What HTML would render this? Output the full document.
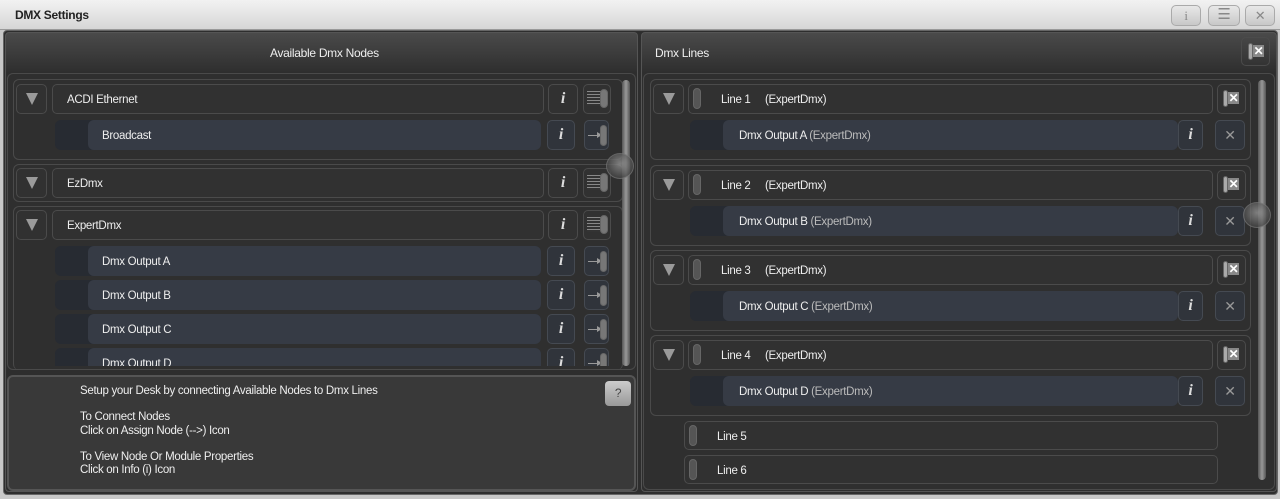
<!DOCTYPE html>
<html><head><meta charset="utf-8"><style>
*{box-sizing:border-box;margin:0;padding:0}
body{width:1280px;height:499px;overflow:hidden;background:#c8c8c8;font-family:"Liberation Sans",sans-serif;font-size:11.5px;color:#eee;position:relative;letter-spacing:-0.3px}
.a{position:absolute}
.title{left:0;top:0;width:1280px;height:30px;background:linear-gradient(#f2f2f2,#d6d6d6);border-bottom:1px solid #999}
.title span{position:absolute;left:15px;top:8px;font-weight:bold;font-size:12px;color:#222}
.tb{top:5px;height:21px;border:1px solid #aaa;border-radius:5px;background:linear-gradient(#e8e8e8,#c8c8c8);color:#888;text-align:center;font-size:13px;line-height:19px}
.body{left:3px;top:30px;width:1275px;height:465px;background:#2e2e2e;border:1px solid #666;border-radius:4px}
.panel{border:1px solid #555;border-radius:4px}
.box{border:1px solid #4a4a4a;border-radius:6px;background:#2f2f2f}
.grp{border:1px solid #4a4a4a;border-radius:6px}
.row{border:1px solid #4b4b4b;border-radius:5px;background:#313131}
.child{border-radius:6px;background:#272b32}
.child .in{position:absolute;left:33px;top:0;right:0;bottom:0;background:#363b45;border-radius:6px}
.btn{border:1px solid #454a52;border-radius:5px;background:#30343b}
.tri{width:0;height:0;border-left:6px solid transparent;border-right:6px solid transparent;border-top:12px solid #9a9a9a}
.i{font-family:"Liberation Serif",serif;font-style:italic;font-weight:bold;font-size:16px;color:#ddd;text-align:center;line-height:28px}
.x{color:#999;text-align:center;font-size:14px;line-height:28px}
.pill{width:8px;height:21px;border-radius:4px;background:#555;border:1px solid #666}
.sb{width:8px;background:linear-gradient(90deg,#555,#999,#555);border-radius:4px}
.ball{width:28px;height:26px;border-radius:50%;background:radial-gradient(circle at 50% 40%,#999,#4a4a4a 70%);opacity:.75;border:1px solid #777}
.t{white-space:nowrap;margin-top:2px}
.g{color:#bbb}
.arr{position:absolute;left:3px;top:14px;width:13px;height:1px;background:#999}
.arr:after{content:"";position:absolute;right:-1px;top:-3px;border-left:5px solid #999;border-top:3px solid transparent;border-bottom:3px solid transparent}
</style></head><body>
<div class="a title"><span>DMX Settings</span></div>
<div class="a tb" style="left:1171px;width:30px;font-family:'Liberation Serif',serif">i</div>
<div class="a tb" style="left:1208px;width:32px;font-size:15px;line-height:17px">☰</div>
<div class="a tb" style="left:1245px;width:30px">✕</div>
<div class="a body"></div>

<div class="a panel" style="left:5px;top:32px;width:633px;height:460px;background:linear-gradient(#4a4a4a,#2e2e2e 40px,#2e2e2e)"></div>
<div class="a t" style="left:270px;top:44px;font-size:12px">Available Dmx Nodes</div>
<div class="a box" style="left:7px;top:73px;width:629px;height:297px"></div>

<div id="left"></div>
<div class="a sb" style="left:622px;top:80px;height:286px"></div>
<div class="a ball" style="left:606px;top:153px"></div>

<div class="a box" style="left:7px;top:375px;width:629px;height:116px;background:#393939;border:2px solid #555"></div>
<div class="a t" style="left:80px;top:383px">Setup your Desk by connecting Available Nodes to Dmx Lines</div>
<div class="a t" style="left:80px;top:409px">To Connect Nodes</div>
<div class="a t" style="left:80px;top:423px">Click on Assign Node (--&gt;) Icon</div>
<div class="a t" style="left:80px;top:449px">To View Node Or Module Properties</div>
<div class="a t" style="left:80px;top:462px">Click on Info (i) Icon</div>
<div class="a" style="left:605px;top:381px;width:26px;height:25px;border-radius:4px;background:linear-gradient(#ccc,#999);color:#444;text-align:center;line-height:25px;font-size:12px">?</div>

<div class="a panel" style="left:641px;top:32px;width:636px;height:460px;background:linear-gradient(#4a4a4a,#2e2e2e 40px,#2e2e2e)"></div>
<div class="a t" style="left:655px;top:44px;font-size:12px">Dmx Lines</div>
<div class="a row" style="left:1241px;top:37px;width:29px;height:29px;background:transparent"></div>
<div class="a pill" style="left:1248px;top:43px;width:5px;height:17px;background:#aaa"></div><div class="a" style="left:1253px;top:45px;width:11px;height:12px;background:#888;color:#fff;font-size:12px;line-height:12px;text-align:center;font-weight:bold">✕</div>
<div class="a box" style="left:643px;top:73px;width:632px;height:417px"></div>

<div id="lines"></div>
<div class="a sb" style="left:1258px;top:80px;height:400px"></div>
<div class="a ball" style="left:1243px;top:202px"></div>

<script>
function hdr(t,name){
return '<div class="a row" style="left:16px;top:'+t+'px;width:31px;height:30px"></div><div class="a tri" style="left:26px;top:'+(t+9)+'px"></div>'+
'<div class="a row" style="left:52px;top:'+t+'px;width:492px;height:30px"></div><div class="a t" style="left:67px;top:'+(t+8)+'px">'+name+'</div>'+
'<div class="a row i" style="left:548px;top:'+t+'px;width:30px;height:30px">i</div>'+
'<div class="a row" style="left:583px;top:'+t+'px;width:28px;height:30px"></div>'+
'<div class="a" style="left:587px;top:'+(t+7)+'px;width:14px;height:15px;background:repeating-linear-gradient(#888 0 1px,#333 1px 3px)"></div><div class="a pill" style="left:600px;top:'+(t+5)+'px;height:19px;background:#777"></div>';
}
function ch(t,name,off){off=off||0;
return '<div class="a child" style="left:'+(55-off)+'px;top:'+t+'px;width:486px;height:30px"><div class="in"></div></div><div class="a t" style="left:'+(102-off)+'px;top:'+(t+8)+'px">'+name+'</div>'+
'<div class="a btn i" style="left:'+(547-off)+'px;top:'+t+'px;width:28px;height:30px">i</div>'+
'<div class="a btn" style="left:'+(584-off)+'px;top:'+t+'px;width:25px;height:30px"><div class="arr"></div><div class="a pill" style="left:15px;top:4px;width:7px;background:#777"></div></div>';
}
var s='<div class="a grp" style="left:13px;top:79px;width:610px;height:81px"></div>'+hdr(84,'ACDI Ethernet')+ch(120,'Broadcast')+
'<div class="a grp" style="left:13px;top:164px;width:610px;height:38px"></div>'+hdr(168,'EzDmx')+
'<div class="a grp" style="left:13px;top:206px;width:610px;height:164px;border-bottom:none"></div>'+hdr(210,'ExpertDmx')+
'<div class="a" style="left:14px;top:244px;width:608px;height:122px;overflow:hidden">'+ch(2,'Dmx Output A',14)+ch(36,'Dmx Output B',14)+ch(70,'Dmx Output C',14)+ch(104,'Dmx Output D',14)+'</div>';
document.getElementById('left').outerHTML=s;

var h='',tops=[79,165,250,335],L=['A','B','C','D'];
tops.forEach(function(t,k){
h+='<div class="a grp" style="left:650px;top:'+t+'px;width:601px;height:81px"></div>'+
'<div class="a row" style="left:653px;top:'+(t+5)+'px;width:31px;height:30px"></div><div class="a tri" style="left:663px;top:'+(t+14)+'px"></div>'+
'<div class="a row" style="left:688px;top:'+(t+5)+'px;width:525px;height:30px"></div><div class="a pill" style="left:693px;top:'+(t+9)+'px"></div>'+
'<div class="a t" style="left:721px;top:'+(t+13)+'px">Line '+(k+1)+'&nbsp;&nbsp;&nbsp;&nbsp; (ExpertDmx)</div>'+
'<div class="a row" style="left:1217px;top:'+(t+5)+'px;width:29px;height:30px"></div><div class="a pill" style="left:1223px;top:'+(t+11)+'px;width:5px;height:17px;background:#aaa"></div><div class="a" style="left:1228px;top:'+(t+13)+'px;width:11px;height:12px;background:#888;color:#fff;font-size:12px;line-height:12px;text-align:center;font-weight:bold">✕</div>'+
'<div class="a child" style="left:690px;top:'+(t+41)+'px;width:488px;height:30px"><div class="in"></div></div>'+
'<div class="a t" style="left:739px;top:'+(t+49)+'px">Dmx Output '+L[k]+' <span class="g">(ExpertDmx)</span></div>'+
'<div class="a btn i" style="left:1178px;top:'+(t+41)+'px;width:25px;height:30px">i</div>'+
'<div class="a btn x" style="left:1215px;top:'+(t+41)+'px;width:30px;height:30px">✕</div>';
});
[421,455].forEach(function(t,k){
h+='<div class="a row" style="left:684px;top:'+t+'px;width:534px;height:29px"></div><div class="a pill" style="left:689px;top:'+(t+4)+'px"></div><div class="a t" style="left:717px;top:'+(t+8)+'px">Line '+(k+5)+'</div>';
});
document.getElementById('lines').outerHTML=h;
</script>
</body></html>
